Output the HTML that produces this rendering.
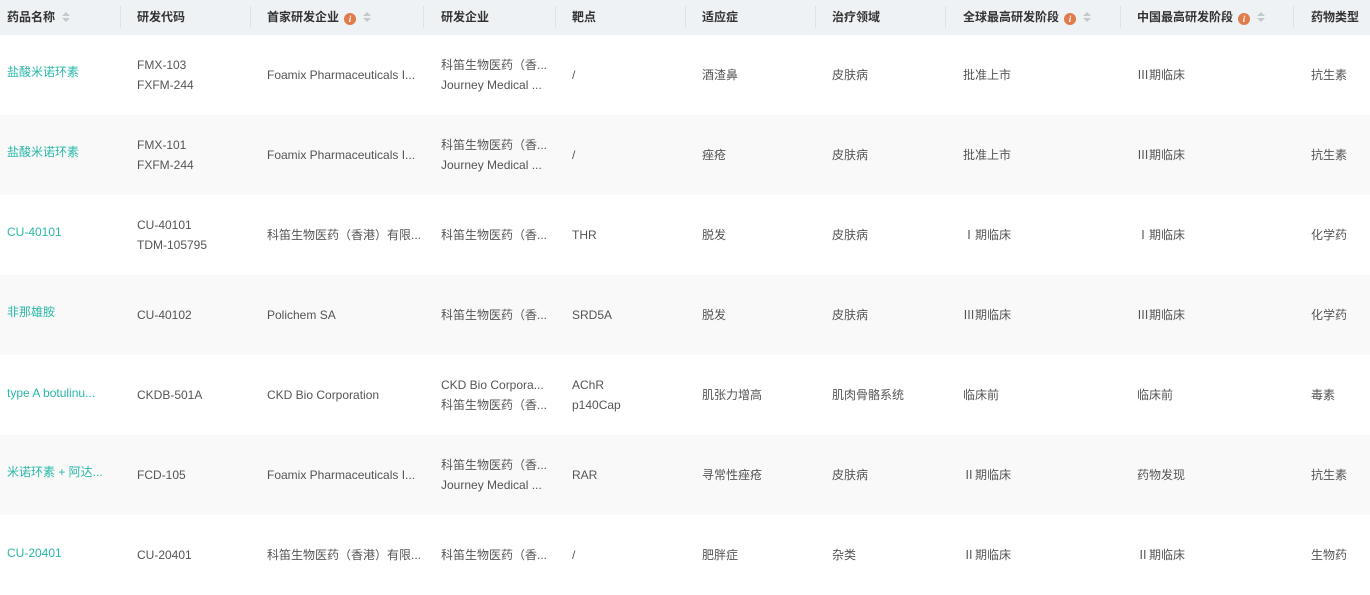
<!DOCTYPE html>
<html><head><meta charset="utf-8"><style>
*{margin:0;padding:0;box-sizing:border-box}
body{width:1370px;height:572px;overflow:hidden;background:#fff;font-family:"Liberation Sans","Noto Sans CJK SC",sans-serif;font-size:12px;color:#555}
.hdr{position:absolute;left:0;top:0;width:1370px;height:35px;background:#eef2f4}
.h{position:absolute;top:0;height:35px;line-height:34px;font-weight:bold;color:#333;font-size:12px;white-space:nowrap}
.sep{position:absolute;top:6px;width:1px;height:22px;background:#dde3e6}
.row{position:absolute;left:0;width:1370px;height:80px}
.c{position:absolute;white-space:nowrap;line-height:20px}
.g{color:#2ab8a8}
.i{display:inline-block;width:12px;height:12px;border-radius:6px;background:#e07b4a;color:#fff;font-size:9px;line-height:12px;text-align:center;font-weight:bold;vertical-align:-1px;margin-left:5px;font-family:"Liberation Serif",serif;font-style:italic}
.s{display:inline-block;width:8px;height:12px;vertical-align:-2px;margin-left:7px;position:relative}
.s:before{content:"";position:absolute;left:0;top:1px;border:4px solid transparent;border-bottom:4px solid #c4c9cc;border-top:0}
.s:after{content:"";position:absolute;left:0;top:7px;border:4px solid transparent;border-top:4px solid #c4c9cc;border-bottom:0}
</style></head><body>
<div class="hdr"></div>
<div class="h" style="left:7px">药品名称<span class="s"></span></div>
<div class="sep" style="left:120px"></div>
<div class="h" style="left:137px">研发代码</div>
<div class="sep" style="left:250px"></div>
<div class="h" style="left:267px">首家研发企业<span class="i">i</span><span class="s"></span></div>
<div class="sep" style="left:423px"></div>
<div class="h" style="left:441px">研发企业</div>
<div class="sep" style="left:555px"></div>
<div class="h" style="left:572px">靶点</div>
<div class="sep" style="left:685px"></div>
<div class="h" style="left:702px">适应症</div>
<div class="sep" style="left:815px"></div>
<div class="h" style="left:832px">治疗领域</div>
<div class="sep" style="left:945px"></div>
<div class="h" style="left:963px">全球最高研发阶段<span class="i">i</span><span class="s"></span></div>
<div class="sep" style="left:1120px"></div>
<div class="h" style="left:1137px">中国最高研发阶段<span class="i">i</span><span class="s"></span></div>
<div class="sep" style="left:1293px"></div>
<div class="h" style="left:1311px">药物类型</div>

<div class="row" style="top:35px;background:#fff">
<div class="c g" style="left:7px;top:27px">盐酸米诺环素</div>
<div class="c" style="left:137px;top:20px">FMX-103<br>FXFM-244</div>
<div class="c" style="left:267px;top:30px">Foamix Pharmaceuticals I...</div>
<div class="c" style="left:441px;top:20px">科笛生物医药（香...<br>Journey Medical ...</div>
<div class="c" style="left:572px;top:30px">/</div>
<div class="c" style="left:702px;top:30px">酒渣鼻</div>
<div class="c" style="left:832px;top:30px">皮肤病</div>
<div class="c" style="left:963px;top:30px">批准上市</div>
<div class="c" style="left:1137px;top:30px">Ⅲ期临床</div>
<div class="c" style="left:1311px;top:30px">抗生素</div>
</div>
<div class="row" style="top:115px;background:#f9f9f9">
<div class="c g" style="left:7px;top:27px">盐酸米诺环素</div>
<div class="c" style="left:137px;top:20px">FMX-101<br>FXFM-244</div>
<div class="c" style="left:267px;top:30px">Foamix Pharmaceuticals I...</div>
<div class="c" style="left:441px;top:20px">科笛生物医药（香...<br>Journey Medical ...</div>
<div class="c" style="left:572px;top:30px">/</div>
<div class="c" style="left:702px;top:30px">痤疮</div>
<div class="c" style="left:832px;top:30px">皮肤病</div>
<div class="c" style="left:963px;top:30px">批准上市</div>
<div class="c" style="left:1137px;top:30px">Ⅲ期临床</div>
<div class="c" style="left:1311px;top:30px">抗生素</div>
</div>
<div class="row" style="top:195px;background:#fff">
<div class="c g" style="left:7px;top:27px">CU-40101</div>
<div class="c" style="left:137px;top:20px">CU-40101<br>TDM-105795</div>
<div class="c" style="left:267px;top:30px">科笛生物医药（香港）有限...</div>
<div class="c" style="left:441px;top:30px">科笛生物医药（香...</div>
<div class="c" style="left:572px;top:30px">THR</div>
<div class="c" style="left:702px;top:30px">脱发</div>
<div class="c" style="left:832px;top:30px">皮肤病</div>
<div class="c" style="left:963px;top:30px">Ⅰ期临床</div>
<div class="c" style="left:1137px;top:30px">Ⅰ期临床</div>
<div class="c" style="left:1311px;top:30px">化学药</div>
</div>
<div class="row" style="top:275px;background:#f9f9f9">
<div class="c g" style="left:7px;top:27px">非那雄胺</div>
<div class="c" style="left:137px;top:30px">CU-40102</div>
<div class="c" style="left:267px;top:30px">Polichem SA</div>
<div class="c" style="left:441px;top:30px">科笛生物医药（香...</div>
<div class="c" style="left:572px;top:30px">SRD5A</div>
<div class="c" style="left:702px;top:30px">脱发</div>
<div class="c" style="left:832px;top:30px">皮肤病</div>
<div class="c" style="left:963px;top:30px">Ⅲ期临床</div>
<div class="c" style="left:1137px;top:30px">Ⅲ期临床</div>
<div class="c" style="left:1311px;top:30px">化学药</div>
</div>
<div class="row" style="top:355px;background:#fff">
<div class="c g" style="left:7px;top:28px">type A botulinu...</div>
<div class="c" style="left:137px;top:30px">CKDB-501A</div>
<div class="c" style="left:267px;top:30px">CKD Bio Corporation</div>
<div class="c" style="left:441px;top:20px">CKD Bio Corpora...<br>科笛生物医药（香...</div>
<div class="c" style="left:572px;top:20px">AChR<br>p140Cap</div>
<div class="c" style="left:702px;top:30px">肌张力增高</div>
<div class="c" style="left:832px;top:30px">肌肉骨骼系统</div>
<div class="c" style="left:963px;top:30px">临床前</div>
<div class="c" style="left:1137px;top:30px">临床前</div>
<div class="c" style="left:1311px;top:30px">毒素</div>
</div>
<div class="row" style="top:435px;background:#f9f9f9">
<div class="c g" style="left:7px;top:27px">米诺环素 + 阿达...</div>
<div class="c" style="left:137px;top:30px">FCD-105</div>
<div class="c" style="left:267px;top:30px">Foamix Pharmaceuticals I...</div>
<div class="c" style="left:441px;top:20px">科笛生物医药（香...<br>Journey Medical ...</div>
<div class="c" style="left:572px;top:30px">RAR</div>
<div class="c" style="left:702px;top:30px">寻常性痤疮</div>
<div class="c" style="left:832px;top:30px">皮肤病</div>
<div class="c" style="left:963px;top:30px">Ⅱ期临床</div>
<div class="c" style="left:1137px;top:30px">药物发现</div>
<div class="c" style="left:1311px;top:30px">抗生素</div>
</div>
<div class="row" style="top:515px;background:#fff">
<div class="c g" style="left:7px;top:28px">CU-20401</div>
<div class="c" style="left:137px;top:30px">CU-20401</div>
<div class="c" style="left:267px;top:30px">科笛生物医药（香港）有限...</div>
<div class="c" style="left:441px;top:30px">科笛生物医药（香...</div>
<div class="c" style="left:572px;top:30px">/</div>
<div class="c" style="left:702px;top:30px">肥胖症</div>
<div class="c" style="left:832px;top:30px">杂类</div>
<div class="c" style="left:963px;top:30px">Ⅱ期临床</div>
<div class="c" style="left:1137px;top:30px">Ⅱ期临床</div>
<div class="c" style="left:1311px;top:30px">生物药</div>
</div>
</body></html>
